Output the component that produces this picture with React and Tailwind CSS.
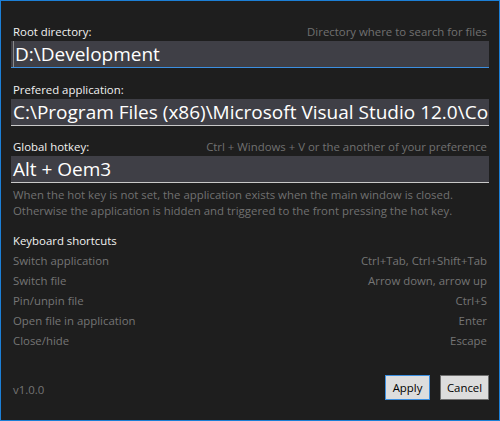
import React from 'react'

const shortcuts = [
  ['Switch application', 'Ctrl+Tab, Ctrl+Shift+Tab'],
  ['Switch file', 'Arrow down, arrow up'],
  ['Pin/unpin file', 'Ctrl+S'],
  ['Open file in application', 'Enter'],
  ['Close/hide', 'Escape'],
]

const Field = ({ label, hint, value, focused }) => (
  <div>
    <div className="flex h-[16px] items-end justify-between px-[2px] leading-[16px]">
      <span className="text-[#f1f1f1]">{label}</span>
      {hint && <span className="text-[#717171]">{hint}</span>}
    </div>
    <div
      className={
        'mt-px flex h-[27px] items-center overflow-hidden whitespace-nowrap border-b bg-[#3f3f46] pl-[2px] text-[19px] leading-[26px] text-white ' +
        (focused ? 'border-[#3c8fe0]' : 'border-[#c8c8c8]')
      }>
      {focused && <span className="mr-px h-[26px] w-px shrink-0 bg-[#8a8a8a]" />}
      <span>{value}</span>
    </div>
  </div>
)

const App = () => {
  return (
    <div
      className="flex h-[421px] w-[500px] flex-col border border-[#1c7fd6] bg-[#1e1e1e] px-[10px] pt-[23px] pb-[20px] text-[11.4px]"
      style={{ fontFamily: '"Open Sans", "Noto Sans", sans-serif' }}>
      <Field label="Root directory:" hint="Directory where to search for files" value="D:\Development" focused />
      <div className="mt-[14px]">
        <Field
          label="Prefered application:"
          value="C:\Program Files (x86)\Microsoft Visual Studio 12.0\Common7\IDE\devenv.exe"
        />
      </div>
      <div className="mt-[13px]">
        <Field label="Global hotkey:" hint="Ctrl + Windows + V or the another of your preference" value="Alt + Oem3" />
      </div>
      <div className="mt-[4px] px-[2px] leading-[16px] text-[#717171]">
        <p>When the hot key is not set, the application exists when the main window is closed.</p>
        <p>Otherwise the application is hidden and triggered to the front pressing the hot key.</p>
      </div>
      <div className="mt-[12px] px-[2px] leading-[20px]">
        <div className="text-[#f1f1f1]">Keyboard shortcuts</div>
        {shortcuts.map(([name, keys]) => (
          <div key={name} className="flex justify-between text-[#757575]">
            <span>{name}</span>
            <span>{keys}</span>
          </div>
        ))}
      </div>
      <div className="flex-1" />
      <div className="flex items-center justify-between">
        <span className="pl-[2px] pt-[4px] text-[#757575]">v1.0.0</span>
        <div className="flex gap-[10px]">
          <button className="h-[25px] w-[45px] border border-[#3c8fe0] bg-[#dddddd] text-black">Apply</button>
          <button className="h-[25px] w-[49px] border border-[#707070] bg-[#dddddd] text-black">Cancel</button>
        </div>
      </div>
    </div>
  )
}

export default App
